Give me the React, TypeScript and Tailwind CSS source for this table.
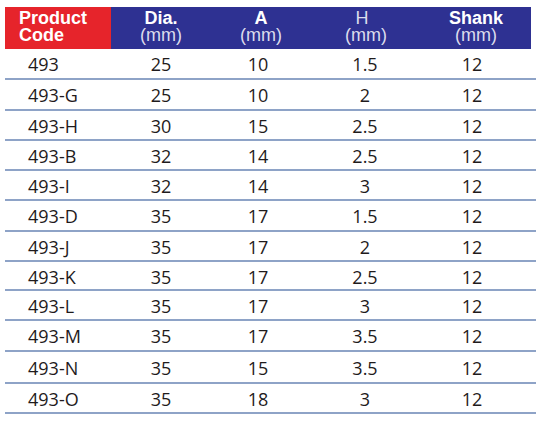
const rows = [
  { code: '493', dia: '25', a: '10', h: '1.5', shank: '12', height: 31 },
  { code: '493-G', dia: '25', a: '10', h: '2', shank: '12', height: 31 },
  { code: '493-H', dia: '30', a: '15', h: '2.5', shank: '12', height: 30 },
  { code: '493-B', dia: '32', a: '14', h: '2.5', shank: '12', height: 30 },
  { code: '493-I', dia: '32', a: '14', h: '3', shank: '12', height: 30 },
  { code: '493-D', dia: '35', a: '17', h: '1.5', shank: '12', height: 31 },
  { code: '493-J', dia: '35', a: '17', h: '2', shank: '12', height: 30 },
  { code: '493-K', dia: '35', a: '17', h: '2.5', shank: '12', height: 29 },
  { code: '493-L', dia: '35', a: '17', h: '3', shank: '12', height: 30 },
  { code: '493-M', dia: '35', a: '17', h: '3.5', shank: '12', height: 31 },
  { code: '493-N', dia: '35', a: '15', h: '3.5', shank: '12', height: 32 },
  { code: '493-O', dia: '35', a: '18', h: '3', shank: '12', height: 30 },
]

const cols = 'grid grid-cols-[106px_100px_100px_110px_110px]'

export default function App() {
  return (
    <div className="w-[536px] h-[424px] bg-white pt-[7px] pl-[5px]">
      {/* header */}
      <div className={`${cols} h-[42px] text-[18px] leading-[17px] font-['Liberation_Sans',Arial,sans-serif]`}>
        <div className="bg-[#e6242b] text-white font-bold pl-[14px] pt-[3px]">
          <div>Product</div>
          <div>Code</div>
        </div>
        <div className="bg-[#2e3192] text-center pt-[3px]">
          <div className="text-white font-bold">Dia.</div>
          <div className="text-[#dcdcec]">(mm)</div>
        </div>
        <div className="bg-[#2e3192] text-center pt-[3px]">
          <div className="text-white font-bold">A</div>
          <div className="text-[#dcdcec]">(mm)</div>
        </div>
        <div className="bg-[#2e3192] text-center pt-[3px]">
          <div className="text-[#dcdcec] pr-[8px]">H</div>
          <div className="text-[#dcdcec]">(mm)</div>
        </div>
        <div className="bg-[#2e3192] text-center pt-[3px]">
          <div className="text-white font-bold">Shank</div>
          <div className="text-[#dcdcec]">(mm)</div>
        </div>
      </div>

      {/* body */}
      <div className="font-['Open_Sans',sans-serif] text-[18px] text-[#1f1b1c]">
        {rows.map((r) => (
          <div
            key={r.code}
            className={`${cols} border-b-2 border-[#8ea3c7] items-center pt-[2px]`}
            style={{ height: r.height }}
          >
            <div className="pl-[23px]">{r.code}</div>
            <div className="text-center">{r.dia}</div>
            <div className="text-center pr-[6px]">{r.a}</div>
            <div className="text-center pr-[2px]">{r.h}</div>
            <div className="text-center pr-[8px]">{r.shank}</div>
          </div>
        ))}
      </div>
    </div>
  )
}
